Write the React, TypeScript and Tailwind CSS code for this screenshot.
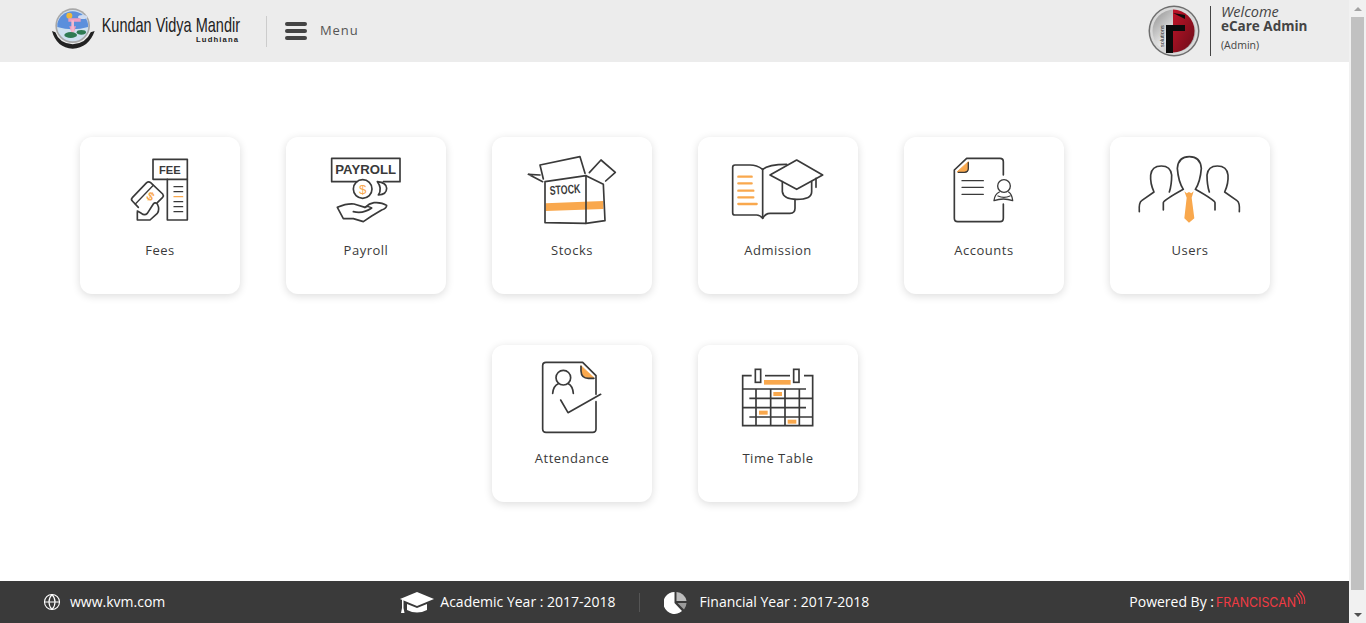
import type { ReactNode } from "react";
import { Globe } from "lucide-react";

const ink = "#3a3a3a";
const orange = "#f9a84d";

function Icon({ box, children }: { box: string; children: ReactNode }) {
  return (
    <svg
      width="160"
      height="90"
      viewBox={box}
      fill="none"
      stroke={ink}
      strokeWidth="5"
      strokeLinecap="round"
      strokeLinejoin="round"
    >
      {children}
    </svg>
  );
}

// Icon coordinates are in 3x units, traced off the reference crops.
function FeesIcon() {
  return (
    <Icon box="30 60 480 270">
      <rect x="249" y="88" width="103" height="60" />
      <text x="267" y="131" fontSize="35" fontWeight="700" textLength="65" lengthAdjust="spacingAndGlyphs" fontFamily="Liberation Sans, sans-serif" fill={ink} stroke="none">
        FEE
      </text>
      <path d="M292 148 V270 H352 V148" />
      <path d="M312 170 H338 M312 185 H338 M312 215 H338 M312 230 H338 M312 245 H338" strokeWidth="4" />
      <path d="M312 200 H338" stroke={orange} strokeWidth="4" />
      <path d="M205 232 L187 213 Q182 208 187 203 L230 158 Q236 153 242 158 L278 192 Q282 197 278 202 L262 218" />
      <path d="M196 222 L250 166" strokeWidth="4" />
      <text x="241" y="211" textAnchor="middle" fontSize="36" fontWeight="700" fontFamily="Liberation Sans, sans-serif" fill={orange} stroke="none" transform="rotate(30 241 200)">
        $
      </text>
      <path d="M202 243 V270 H240 L262 250 Q270 238 262 222 Q254 214 248 225 L232 250 Q224 258 214 250 L202 243" />
    </Icon>
  );
}

function PayrollIcon() {
  return (
    <Icon box="648 60 480 270">
      <path d="M860 155 H785 V85 H990 V155 H940" />
      <text x="796" y="132" fontSize="38" fontWeight="700" textLength="182" lengthAdjust="spacingAndGlyphs" fontFamily="Liberation Sans, sans-serif" fill={ink} stroke="none">
        PAYROLL
      </text>
      <circle cx="878" cy="177" r="28" />
      <text x="878" y="191" textAnchor="middle" fontSize="40" fontFamily="Liberation Sans, sans-serif" fill={orange} stroke="none">
        $
      </text>
      <path d="M922 155 Q950 158 950 175 Q950 194 925 195 Q938 175 922 155" />
      <path d="M802 232 Q830 220 852 222 L885 232 Q898 220 912 218 Q935 216 950 226 Q950 236 935 240 L905 258 L880 275 L850 266 L820 266 Z" />
      <path d="M850 245 Q880 252 905 234 Q892 226 885 232" />
    </Icon>
  );
}

function StocksIcon() {
  return (
    <Icon box="6 60 480 270">
      <path d="M167 220 L340 213 V237 L167 243 Z" fill={orange} stroke="none" />
      <path d="M165 155 L288 137 V280 L165 278 Z" />
      <path d="M288 137 L340 163 L345 272 L288 280" />
      <path d="M160 147 L150 105 L270 80 L285 130" />
      <path d="M158 155 L115 133 L150 135" />
      <path d="M298 128 L333 90 L376 127 L347 153" />
      <text x="180" y="195" fontSize="38" fontWeight="700" textLength="92" lengthAdjust="spacingAndGlyphs" fontFamily="Liberation Sans, sans-serif" fill={ink} stroke="none" transform="rotate(-4 180 195)">
        STOCK
      </text>
    </Icon>
  );
}

function AdmissionIcon() {
  return (
    <Icon box="624 60 480 270">
      <path d="M818 118 Q800 105 780 105 H735 Q728 105 728 112 V248 Q728 255 735 255 H800 Q810 255 818 265 Q826 250 840 250 H900 Q915 250 915 235 V210" />
      <path d="M818 118 V265" />
      <path d="M818 118 Q835 103 890 103" />
      <path d="M745 140 H785 M745 160 H785 M745 182 H790 M745 202 H790 M745 222 H800" stroke={orange} strokeWidth="7" />
      <path d="M840 135 L920 90 L998 135 L920 178 Z" />
      <path d="M877 155 V185 Q880 208 920 208 Q965 208 965 185 V155" />
      <path d="M978 145 V172" />
    </Icon>
  );
}

function AccountsIcon() {
  return (
    <Icon box="12 60 480 270">
      <path d="M310 135 V95 Q310 85 300 85 H200 L163 120 V265 Q163 275 173 275 H300 Q310 275 310 265 V222" />
      <path d="M172 125 L205 95 V115 Q205 127 193 127 Z" fill={orange} stroke={orange} strokeWidth="3" />
      <path d="M205 98 V115 Q205 127 193 127 H175" strokeWidth="4" />
      <path d="M186 152 H250 M186 172 H250 M186 193 H250" strokeWidth="4" />
      <circle cx="312" cy="168" r="19" strokeWidth="4" />
      <path d="M282 212 Q284 192 298 186 M338 212 Q336 192 326 186 M282 212 Q310 202 338 212 M294 198 Q312 206 330 198" strokeWidth="4" />
    </Icon>
  );
}

function UsersIcon() {
  return (
    <Icon box="630 60 480 270">
      <path d="M790 240 V218 Q792 210 850 178 Q835 155 832 115 Q835 80 868 80 Q901 80 904 115 Q901 155 886 178 Q943 210 945 218 V240" />
      <path d="M718 245 Q716 218 725 212 L762 186 Q750 160 752 135 Q755 108 784 108 Q812 108 815 135 Q815 165 808 186" />
      <path d="M1018 245 Q1020 218 1011 212 L974 186 Q986 160 984 135 Q981 108 952 108 Q924 108 921 135 Q921 165 928 186" />
      <path d="M853 184 L860 190 L867 186 L874 190 L881 184 L875 203 L883 265 L867 278 L853 265 L860 203 Z" fill={orange} stroke="none" />
    </Icon>
  );
}

function AttendanceIcon() {
  return (
    <Icon box="6 39 480 270">
      <path d="M318 170 V252 Q318 262 308 262 H168 Q158 262 158 252 V62 Q158 52 168 52 H278 L318 92 V148" />
      <path d="M273 62 L312 98 Q274 108 273 70 Z" fill={orange} stroke={orange} strokeWidth="2" />
      <path d="M273 64 V78 Q274 100 295 100 H312" />
      <circle cx="220" cy="98" r="22" />
      <path d="M188 145 Q190 122 205 116 M250 145 Q248 122 235 116" />
      <path d="M212 165 L234 203 L332 148" />
    </Icon>
  );
}

function TimeTableIcon() {
  return (
    <Icon box="624 39 480 270">
      <g strokeLinecap="butt" strokeLinejoin="miter">
        <path d="M785 92 H758 V242 H968 V92 H942" />
        <path d="M825 92 H900" />
        <rect x="796" y="73" width="16" height="39" />
        <rect x="911" y="73" width="16" height="39" />
        <path d="M758 132 H948 M778 160 H968 M758 188 H948 M778 216 H968" />
        <path d="M798 132 V242 M842 132 V242 M885 132 V242 M928 132 V242" />
      </g>
      <g fill={orange} stroke="none">
        <rect x="822" y="105" width="80" height="14" />
        <rect x="850" y="141" width="26" height="12" />
        <rect x="807" y="197" width="26" height="12" />
        <rect x="893" y="224" width="26" height="12" />
      </g>
    </Icon>
  );
}

const modules = [
  { label: "Fees", icon: <FeesIcon /> },
  { label: "Payroll", icon: <PayrollIcon /> },
  { label: "Stocks", icon: <StocksIcon /> },
  { label: "Admission", icon: <AdmissionIcon /> },
  { label: "Accounts", icon: <AccountsIcon /> },
  { label: "Users", icon: <UsersIcon /> },
  { label: "Attendance", icon: <AttendanceIcon /> },
  { label: "Time Table", icon: <TimeTableIcon /> },
];

function SchoolLogo() {
  return (
    <svg width="192" height="50" viewBox="153 9 576 150" className="shrink-0 overflow-visible">
      <path d="M156 84 Q170 135 218 137 Q266 135 284 84 L272 88 Q258 122 218 124 Q178 122 166 88 Z" fill="#222222" />
      <circle cx="218" cy="68" r="52" fill="#a8a8a8" />
      <circle cx="218" cy="68" r="47" fill="#cfe0ef" />
      <path d="M172 62 A47 47 0 0 1 264 62 L264 72 Q218 86 172 72 Z" fill="#5b8fdc" />
      <ellipse cx="248" cy="42" rx="14" ry="6" fill="#cfdcf2" />
      <circle cx="208" cy="38" r="9" fill="#f0b93a" />
      <path d="M205 46 H242 V56 H205 Z M208 70 H228 L222 88 H214 Z" fill="#ef9cc0" />
      <path d="M214 52 H222 V88 H214 Z" fill="#f3b7cd" />
      <ellipse cx="212" cy="96" rx="19" ry="9" fill="#2f7a52" />
      <ellipse cx="244" cy="88" rx="14" ry="7" fill="#2f7a52" />
      <text x="305" y="86" fontSize="62" textLength="415" lengthAdjust="spacingAndGlyphs" fontFamily="Liberation Sans, sans-serif" fill="#222222">
        Kundan Vidya Mandir
      </text>
      <text x="588" y="117" fontSize="23" fontWeight="700" textLength="126" fontFamily="Liberation Sans, sans-serif" fill="#222222">
        Ludhiana
      </text>
    </svg>
  );
}

function AdminAvatar() {
  return (
    <svg width="52" height="52" viewBox="0 0 52 52" className="shrink-0">
      <defs>
        <linearGradient id="silver" x1="0" x2="1" y1="0" y2="1">
          <stop offset="0" stopColor="#8e8e8e" />
          <stop offset="0.5" stopColor="#e6e6e6" />
          <stop offset="1" stopColor="#8a8a8a" />
        </linearGradient>
        <linearGradient id="crimson" x1="0" x2="1" y1="0" y2="1">
          <stop offset="0" stopColor="#c01428" />
          <stop offset="1" stopColor="#6a0c18" />
        </linearGradient>
      </defs>
      <circle cx="26" cy="26" r="25.5" fill="#6e6e6e" />
      <circle cx="26" cy="26" r="24" fill="#d9d9d9" />
      <circle cx="26" cy="26" r="21.5" fill="url(#silver)" />
      <path d="M25 4.5 A21.5 21.5 0 0 1 25 47.5 Z" fill="url(#crimson)" />
      <path d="M18 20 H37 V26 H25 V48 H18 Z M25 8 L37 10 V14 Z" fill="#0b0b0b" />
      <text x="16" y="42" fontSize="5.5" fill="#222222" fontFamily="Liberation Sans, sans-serif" transform="rotate(-90 16 42)">
        solutions
      </text>
    </svg>
  );
}

function Header() {
  return (
    <header className="flex h-[62px] shrink-0 items-center bg-[#ececec] pl-[51px]">
      <SchoolLogo />
      <div className="ml-[23px] h-[31px] w-px bg-[#cccccc]" />
      <div className="ml-[18px] flex w-[22px] flex-col gap-[3px]">
        <span className="h-[4px] rounded-sm bg-[#444444]" />
        <span className="h-[4px] rounded-sm bg-[#444444]" />
        <span className="h-[4px] rounded-sm bg-[#444444]" />
      </div>
      <span className="ml-[13px] text-[13px] tracking-[0.9px] text-[#555555]">Menu</span>
      <div className="ml-auto flex items-center">
        <AdminAvatar />
        <div className="ml-[10px] h-[50px] w-px bg-[#444444]" />
        <div className="ml-[10px] flex w-[128px] flex-col pb-[6px] text-[#444444]">
          <span className="text-[14.5px] leading-[15px] italic">Welcome</span>
          <span className="text-[13.5px] leading-[15px] font-bold">eCare Admin</span>
          <span className="mt-[4px] text-[10.5px] leading-[14px]">(Admin)</span>
        </div>
      </div>
    </header>
  );
}

function ModuleCard({ label, icon }: { label: string; icon: ReactNode }) {
  return (
    <div className="flex h-[157px] w-[160px] flex-col items-center rounded-[12px] bg-white pt-[13px] shadow-[0_2px_8px_rgba(0,0,0,0.14)]">
      {icon}
      <span className="text-[13px] leading-5 tracking-[0.5px] text-[#3a3a3a]">{label}</span>
    </div>
  );
}

function Footer() {
  return (
    <footer className="flex h-[42px] shrink-0 items-center bg-[#3a3a3a] pr-[43px] pl-[43px] text-[14px] font-medium text-white">
      <Globe size={18} strokeWidth={1.5} />
      <span className="ml-[9px] pb-[2px]">www.kvm.com</span>
      <div className="ml-[235px] flex items-center">
        <svg width="34" height="24" viewBox="0 0 34 24" fill="#ffffff">
          <path d="M17 2 L34 9 L17 16 L0 9 Z" />
          <path d="M7 14 L17 18 L27 14 V20 Q17 25 7 20 Z" />
          <path d="M2 10 H3.5 V18 L4.5 23 H1 L2 18 Z" />
        </svg>
        <span className="ml-[6px] pb-[2px]">Academic Year : 2017-2018</span>
      </div>
      <div className="ml-[23px] h-[19px] w-px bg-[#555555]" />
      <svg width="23" height="23" viewBox="0 0 23 23" className="ml-[24px]">
        <path d="M10.5 1 V12 L18 20 A11 11 0 1 1 10.5 1 Z" fill="#ffffff" />
        <path d="M12.5 1 A10.5 10.5 0 0 1 22.5 10 H12.5 Z" fill="#bdbdbd" />
        <path d="M13.5 12 H22.5 A11 11 0 0 1 20 18.5 Z" fill="#9a9a9a" />
      </svg>
      <span className="ml-[13px] pb-[2px]">Financial Year : 2017-2018</span>
      <span className="ml-auto pb-[2px]">Powered By :</span>
      <svg width="90" height="24" viewBox="0 0 90 24" className="ml-[2px]" fill="none" stroke="#f03a44">
        <text x="0" y="17" fontSize="13" fontWeight="400" textLength="80" lengthAdjust="spacingAndGlyphs" fontFamily="Inter, sans-serif" fill="#f03a44" stroke="none">
          FRANCISCAN
        </text>
        <path d="M80 5 Q84 9 83.5 14 M82 3 Q87 8 86 14 M84 1 Q90 7 88.5 14" strokeWidth="1.1" />
      </svg>
    </footer>
  );
}

function Scrollbar() {
  return (
    <div className="flex w-[17px] shrink-0 flex-col items-center bg-[#f1f1f1]">
      <div className="flex h-[17px] w-full items-center justify-center">
        <span className="h-0 w-0 border-x-[4px] border-b-[4px] border-x-transparent border-b-[#a3a3a3]" />
      </div>
      <div className="h-[573px] w-[13px] bg-[#c1c1c1]" />
      <div className="mt-auto flex h-[17px] w-full items-center justify-center">
        <span className="h-0 w-0 border-x-[4px] border-t-[4px] border-x-transparent border-t-[#505050]" />
      </div>
    </div>
  );
}

export default function App() {
  return (
    <div className="flex h-[623px] w-full overflow-hidden bg-white font-['Open_Sans',sans-serif]">
      <div className="flex min-w-0 flex-1 flex-col">
        <Header />
        <main className="flex-1 pt-[75px] pl-[80px]">
          <div className="flex w-[1190px] flex-wrap justify-center gap-x-[46px] gap-y-[51px]">
            {modules.map((m) => (
              <ModuleCard key={m.label} label={m.label} icon={m.icon} />
            ))}
          </div>
        </main>
        <Footer />
      </div>
      <Scrollbar />
    </div>
  );
}
